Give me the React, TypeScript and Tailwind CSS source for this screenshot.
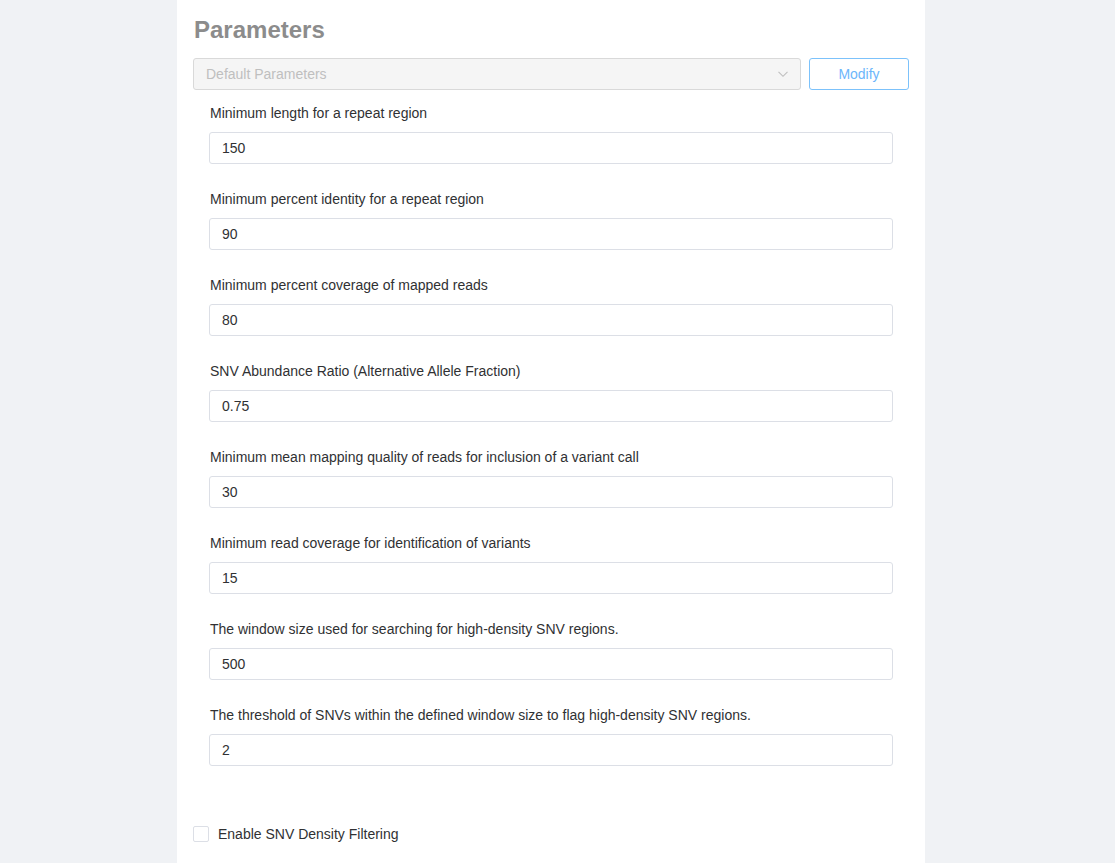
import React from "react";

const fields: [string, string][] = [
  ["Minimum length for a repeat region", "150"],
  ["Minimum percent identity for a repeat region", "90"],
  ["Minimum percent coverage of mapped reads", "80"],
  ["SNV Abundance Ratio (Alternative Allele Fraction)", "0.75"],
  ["Minimum mean mapping quality of reads for inclusion of a variant call", "30"],
  ["Minimum read coverage for identification of variants", "15"],
  ["The window size used for searching for high-density SNV regions.", "500"],
  ["The threshold of SNVs within the defined window size to flag high-density SNV regions.", "2"],
];

export default function App() {
  return (
    <div
      className="min-h-[863px] w-full bg-[#f0f2f5] flex"
      style={{ fontFamily: '"Liberation Sans", Arial, sans-serif' }}
    >
      <div className="ml-[177px] w-[748px] bg-white px-4 pt-[14px] pb-[20px] min-h-[863px]">
        <h1 className="text-[24px] leading-[32px] font-bold text-[#8c8c8c] pl-[1px]">Parameters</h1>
        <div className="mt-[12px] flex gap-2">
          <div className="flex-1 h-8 bg-[#f5f5f5] border border-[#d9d9d9] rounded-[3px] flex items-center justify-between pl-[12px] pr-[11px]">
            <span className="text-[14px] text-[#bfbfbf]">Default Parameters</span>
            <svg width="12" height="12" viewBox="0 0 12 12" fill="none">
              <path d="M1.5 3.8 L6 8.3 L10.5 3.8" stroke="#bfbfbf" strokeWidth="1.1" />
            </svg>
          </div>
          <button className="w-[100px] h-8 border border-[#7cc2fb] rounded-[3px] bg-white text-[14px] text-[#6cb6fb]">
            Modify
          </button>
        </div>
        <div className="px-4 pt-[12px]">
          {fields.map(([label, value]) => (
            <div key={label} className="mb-[24px]">
              <div className="text-[14px] leading-[22px] text-[#303133] mb-[8px] pl-[1px]">{label}</div>
              <div className="h-8 border border-[#dcdfe6] rounded-[3px] flex items-center px-[12px] text-[14px] text-[#303133]">
                {value}
              </div>
            </div>
          ))}
        </div>
        <div className="mt-[57px] flex items-center gap-2">
          <span className="w-4 h-4 border border-[#dcdfe6] rounded-[2px] bg-white inline-block" />
          <span className="text-[14px] leading-[22px] text-[#303133] pl-[1px]">Enable SNV Density Filtering</span>
        </div>
      </div>
    </div>
  );
}
